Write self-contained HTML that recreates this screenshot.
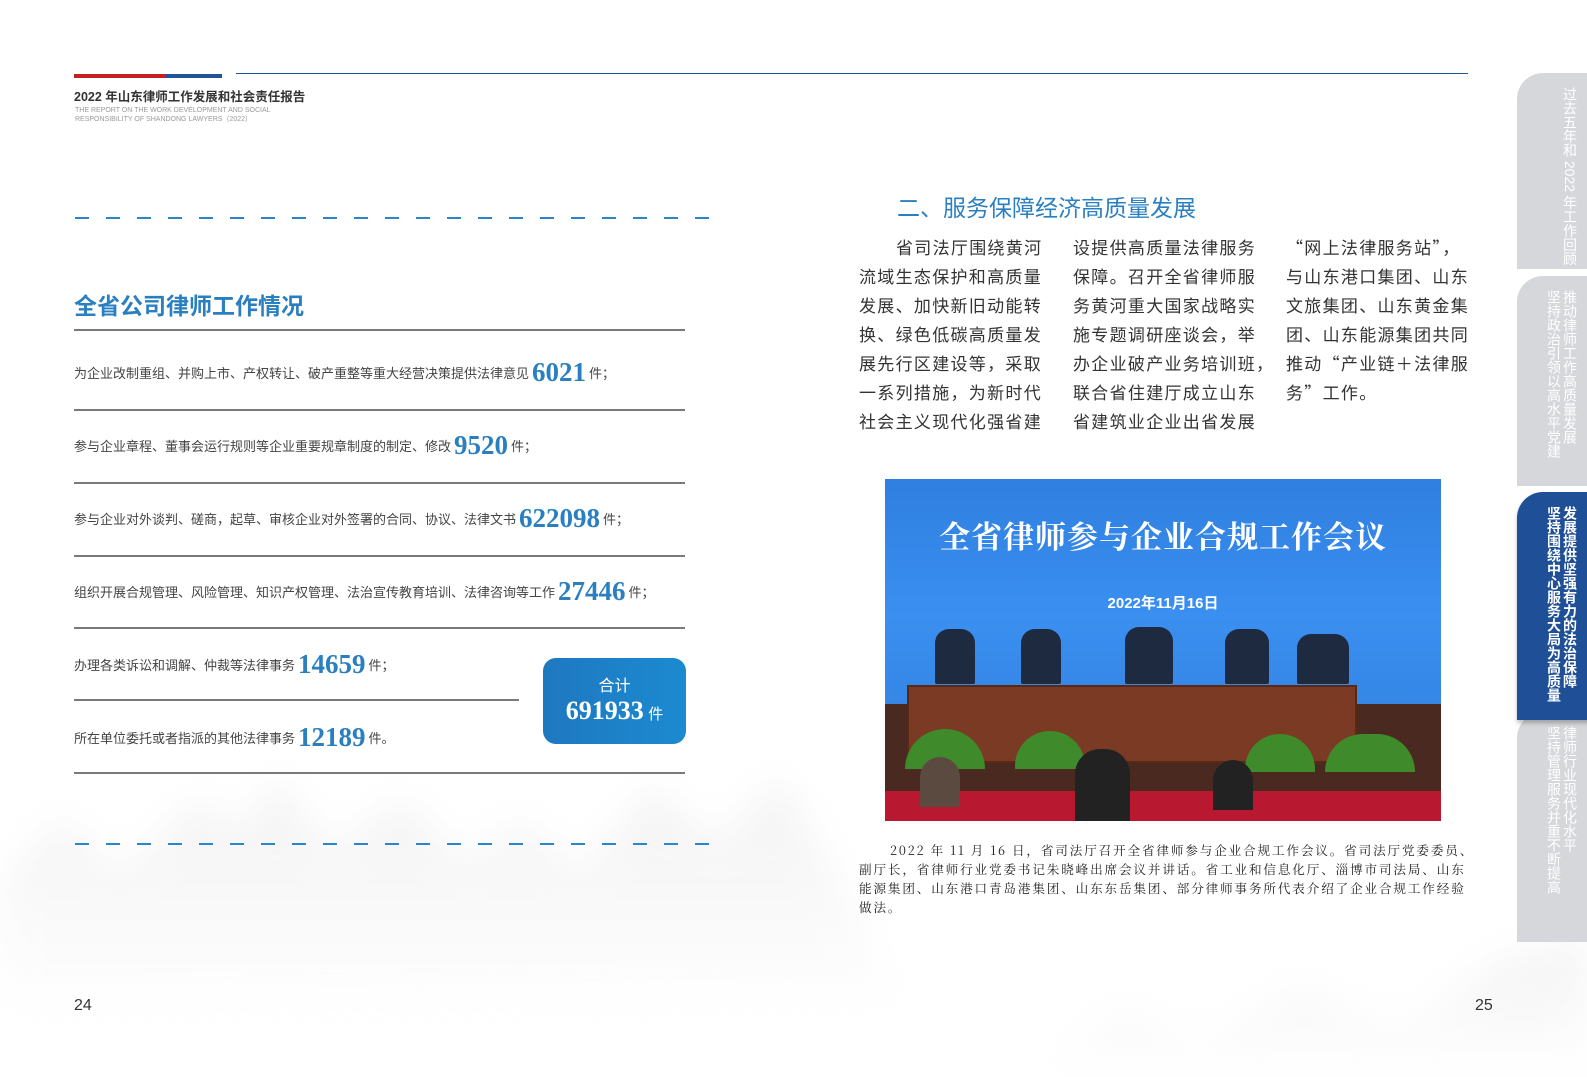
<!DOCTYPE html>
<html><head><meta charset="utf-8">
<style>
*{margin:0;padding:0;box-sizing:border-box}
body{width:1587px;height:1077px;position:relative;overflow:hidden;background:#fff;font-family:"Liberation Sans","Noto Sans CJK SC",sans-serif;color:#333}
.a{position:absolute}
.dash{position:absolute;left:75px;width:636px;height:2px;background:repeating-linear-gradient(90deg,#2a86c8 0 14px,transparent 14px 31px)}
.hl{position:absolute;left:74px;width:611px;height:2px;background:#7a7a7a}
.row{position:absolute;left:74px;font-size:13px;color:#444;white-space:nowrap;line-height:30px}
.row b{font-family:"Liberation Serif",serif;font-weight:bold;font-size:27px;color:#2a7fc0;vertical-align:-3px;margin:0 3px}
.col{position:absolute;top:232px;font-family:"Noto Sans CJK SC",sans-serif;font-size:17px;line-height:29px;letter-spacing:1.3px;color:#333;white-space:nowrap}
.tab{position:absolute;left:1517px;width:75px;background:#d5d7da;border-radius:26px 0 0 0;writing-mode:vertical-rl;color:#fff;font-size:14px;line-height:16px;padding:14px 0 0 0;white-space:nowrap}
</style></head><body>
<svg class="a" style="left:0;top:760px" width="1587" height="317">
<defs><filter id="f"><feGaussianBlur stdDeviation="18"/></filter><linearGradient id="g" x1="0" y1="0" x2="0" y2="1"><stop offset="0" stop-color="#dcdcdc"/><stop offset="1" stop-color="#fff"/></linearGradient></defs>
<g filter="url(#f)" opacity="0.35" fill="url(#g)">
<path d="M0 120 L60 60 L120 110 L200 40 L240 70 L280 20 L330 90 L400 40 L470 100 L520 60 L580 110 L650 30 L720 80 L780 20 L840 120 L900 240 L0 260Z"/>
<path d="M1050 300 L1120 250 L1200 280 L1300 230 L1400 270 L1500 200 L1587 180 L1587 317 L1050 317Z"/>
</g></svg>
<div class="a" style="left:74px;top:74px;width:92px;height:4px;background:#c51f26"></div>
<div class="a" style="left:166px;top:74px;width:56px;height:4px;background:#21539a"></div>
<div class="a" style="left:236px;top:73px;width:1232px;height:1px;background:#21539a"></div>
<div class="a" style="left:74px;top:86px;font-size:12.5px;font-weight:bold;color:#333">2022 年山东律师工作发展和社会责任报告</div>
<div class="a" style="left:75px;top:106px;font-size:7px;line-height:9px;color:#999">THE REPORT ON THE WORK DEVELOPMENT AND SOCIAL<br>RESPONSIBILITY OF SHANDONG LAWYERS（2022）</div>
<div class="dash" style="top:217px"></div>
<div class="dash" style="top:843px"></div>
<div class="a" style="left:74px;top:287px;font-size:23px;font-weight:bold;color:#2a7fc0">全省公司律师工作情况</div>
<div class="hl" style="top:329px"></div>
<div class="hl" style="top:409px"></div>
<div class="hl" style="top:482px"></div>
<div class="hl" style="top:555px"></div>
<div class="hl" style="top:627px"></div>
<div class="hl" style="top:699px;width:445px"></div>
<div class="hl" style="top:772px"></div>
<div class="row" style="top:357px">为企业改制重组、并购上市、产权转让、破产重整等重大经营决策提供法律意见<b>6021</b>件；</div>
<div class="row" style="top:430px">参与企业章程、董事会运行规则等企业重要规章制度的制定、修改<b>9520</b>件；</div>
<div class="row" style="top:503px">参与企业对外谈判、磋商，起草、审核企业对外签署的合同、协议、法律文书<b>622098</b>件；</div>
<div class="row" style="top:576px">组织开展合规管理、风险管理、知识产权管理、法治宣传教育培训、法律咨询等工作<b>27446</b>件；</div>
<div class="row" style="top:649px">办理各类诉讼和调解、仲裁等法律事务<b>14659</b>件；</div>
<div class="row" style="top:722px">所在单位委托或者指派的其他法律事务<b>12189</b>件。</div>
<div class="a" style="left:543px;top:658px;width:143px;height:86px;border-radius:13px;background:linear-gradient(90deg,#1e78c0,#1c8ad0);color:#fff;text-align:center">
<div style="font-size:16px;margin-top:14px">合计</div>
<div><span style="font-family:'Liberation Serif',serif;font-weight:bold;font-size:26px">691933</span> <span style="font-size:15px">件</span></div></div>
<div class="a" style="left:897px;top:189px;font-size:23px;color:#2a7fc0">二、服务保障经济高质量发展</div>
<div class="col" style="left:859px"><span style="padding-left:37px"></span>省司法厅围绕黄河<br>流域生态保护和高质量<br>发展、加快新旧动能转<br>换、绿色低碳高质量发<br>展先行区建设等，采取<br>一系列措施，为新时代<br>社会主义现代化强省建</div>
<div class="col" style="left:1073px">设提供高质量法律服务<br>保障。召开全省律师服<br>务黄河重大国家战略实<br>施专题调研座谈会，举<br>办企业破产业务培训班，<br>联合省住建厅成立山东<br>省建筑业企业出省发展</div>
<div class="col" style="left:1286px">“网上法律服务站”，<br>与山东港口集团、山东<br>文旅集团、山东黄金集<br>团、山东能源集团共同<br>推动“产业链＋法律服<br>务”工作。</div>
<div class="a" style="left:885px;top:479px;width:556px;height:342px;overflow:hidden;background:linear-gradient(180deg,#2f7fe0,#3a8ff0 40%,#2f7bd8)">
<div class="a" style="left:0;top:33px;width:556px;text-align:center;color:#fff;font-family:'Noto Serif CJK SC',serif;font-weight:bold;font-size:31px;letter-spacing:1px">全省律师参与企业合规工作会议</div>
<div class="a" style="left:0;top:113px;width:556px;text-align:center;color:#fff;font-weight:bold;font-size:15px">2022年11月16日</div>
<div class="a" style="left:0;top:225px;width:556px;height:117px;background:#4a2a20"></div>
<div class="a" style="left:22px;top:206px;width:450px;height:78px;background:#7a3a24;border:2px solid #5a2815"></div>
<div class="a" style="left:50px;top:150px;width:40px;height:55px;background:#1e2a40;border-radius:14px 14px 2px 2px"></div>
<div class="a" style="left:136px;top:150px;width:40px;height:55px;background:#1e2a40;border-radius:14px 14px 2px 2px"></div>
<div class="a" style="left:240px;top:148px;width:48px;height:57px;background:#1e2a40;border-radius:14px 14px 2px 2px"></div>
<div class="a" style="left:340px;top:150px;width:44px;height:55px;background:#1e2a40;border-radius:14px 14px 2px 2px"></div>
<div class="a" style="left:412px;top:155px;width:52px;height:50px;background:#1e2a40;border-radius:14px 14px 2px 2px"></div>
<div class="a" style="left:20px;top:250px;width:80px;height:40px;background:#3f8a2a;border-radius:40px 40px 0 0"></div>
<div class="a" style="left:130px;top:252px;width:70px;height:38px;background:#3f8a2a;border-radius:40px 40px 0 0"></div>
<div class="a" style="left:360px;top:255px;width:70px;height:38px;background:#3f8a2a;border-radius:40px 40px 0 0"></div>
<div class="a" style="left:440px;top:255px;width:90px;height:38px;background:#3f8a2a;border-radius:40px 40px 0 0"></div>
<div class="a" style="left:0;top:312px;width:556px;height:30px;background:#b81830"></div>
<div class="a" style="left:190px;top:270px;width:55px;height:72px;background:#222;border-radius:25px 25px 0 0"></div>
<div class="a" style="left:35px;top:278px;width:40px;height:50px;background:#5a4a40;border-radius:20px 20px 0 0"></div>
<div class="a" style="left:328px;top:281px;width:40px;height:50px;background:#222;border-radius:20px 20px 0 0"></div>
</div>
<div class="a" style="left:859px;top:840px;font-family:'Noto Serif CJK SC',serif;font-size:12.6px;line-height:19px;color:#222;white-space:nowrap;letter-spacing:1.85px"><span style="padding-left:31px"></span>2022 年 11 月 16 日，省司法厅召开全省律师参与企业合规工作会议。省司法厅党委委员、<br>副厅长，省律师行业党委书记朱晓峰出席会议并讲话。省工业和信息化厅、淄博市司法局、山东<br>能源集团、山东港口青岛港集团、山东东岳集团、部分律师事务所代表介绍了企业合规工作经验<br>做法。</div>
<div class="tab" style="top:73px;height:196px;padding-right:14px">过去五年和 2022 年工作回顾</div>
<div class="tab" style="top:276px;height:210px;padding-right:14px">推动律师工作高质量发展<br>坚持政治引领以高水平党建</div>
<div class="tab" style="top:712px;height:230px;padding-right:14px">律师行业现代化水平<br>坚持管理服务并重不断提高</div>
<div class="tab" style="top:492px;height:228px;background:#1f4f96;font-weight:bold;padding-right:14px;box-shadow:0 3px 4px rgba(0,0,0,.25)">发展提供坚强有力的法治保障<br>坚持围绕中心服务大局为高质量</div>
<div class="a" style="left:74px;top:997px;font-size:16px;color:#333">24</div>
<div class="a" style="left:1475px;top:997px;font-size:16px;color:#333">25</div>
</body></html>
